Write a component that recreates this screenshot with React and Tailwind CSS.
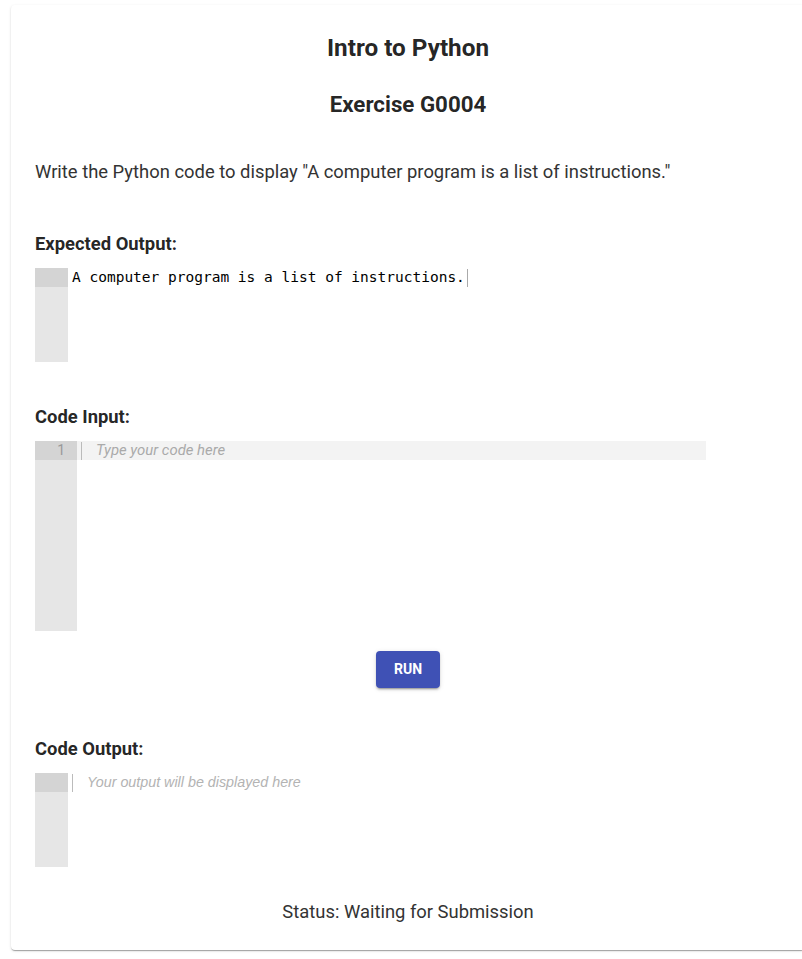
export default function App() {
  return (
    <div className="min-h-screen w-full overflow-hidden bg-white" style={{ fontFamily: 'Roboto, "Liberation Sans", sans-serif' }}>
      <div className="ml-[11px] mt-[5px] w-[794px] rounded-[4px] bg-white px-[24px] pt-[27px] pb-[25px] text-[rgba(0,0,0,0.87)] shadow-[0_2px_1px_-1px_rgba(0,0,0,0.2),0_1px_1px_0_rgba(0,0,0,0.14),0_1px_3px_0_rgba(0,0,0,0.12)]">
        {/* Header */}
        <h1 className="text-center text-[24.3px] font-bold leading-[32px]">Intro to Python</h1>
        <h2 className="mt-[26px] text-center text-[22.3px] font-bold leading-[28px]">Exercise G0004</h2>

        <p className="mt-[40px] text-[18.4px] leading-[27px] text-[#333]">
          Write the Python code to display "A computer program is a list of instructions."
        </p>

        {/* Expected output */}
        <h3 className="mt-[47px] text-[18.4px] font-bold leading-[24px]">Expected Output:</h3>
        <div className="mt-[12px] flex h-[94px]">
          <div className="flex w-[33px] flex-col bg-[#e6e6e6]">
            <div className="h-[19px] bg-[#d4d4d4]" />
          </div>
          <div className="flex h-[19px] items-center pl-[4px]">
            <span className="text-[14.5px] leading-[19px] text-black" style={{ fontFamily: '"DejaVu Sans Mono", "Liberation Mono", monospace' }}>
              A computer program is a list of instructions.
            </span>
            <span className="ml-[2px] h-[18px] w-px bg-[#aaa]" />
          </div>
        </div>

        {/* Code input */}
        <h3 className="mt-[43px] text-[18.4px] font-bold leading-[24px]">Code Input:</h3>
        <div className="mt-[12px] flex h-[190px] w-[671px]">
          <div className="flex w-[42px] flex-col bg-[#e6e6e6]">
            <div className="h-[19px] bg-[#d4d4d4] pr-[12px] text-right text-[14px] leading-[19px] text-[#999]">1</div>
          </div>
          <div className="flex-1">
            <div className="flex h-[19px] items-center bg-[#f3f3f3] pl-[4px]">
              <span className="h-[18px] w-px bg-[#bbb]" />
              <span className="ml-[14px] text-[14.9px] italic leading-[19px] text-[#aaa]">Type your code here</span>
            </div>
          </div>
        </div>

        <div className="mt-[20px] flex justify-center">
          <button className="h-[37px] w-[64px] rounded-[4px] bg-[#3f51b5] text-[14px] font-bold text-white shadow-[0_3px_1px_-2px_rgba(0,0,0,0.2),0_2px_2px_0_rgba(0,0,0,0.14),0_1px_5px_0_rgba(0,0,0,0.12)]">
            RUN
          </button>
        </div>

        {/* Code output */}
        <h3 className="mt-[49px] text-[18.4px] font-bold leading-[24px]">Code Output:</h3>
        <div className="mt-[12px] flex h-[94px]">
          <div className="flex w-[33px] flex-col bg-[#e6e6e6]">
            <div className="h-[19px] bg-[#d4d4d4]" />
          </div>
          <div className="flex h-[19px] items-center pl-[4px]">
            <span className="h-[18px] w-px bg-[#bbb]" />
            <span className="ml-[14px] text-[14.3px] italic leading-[19px] text-[#b3b3b3]" style={{ fontFamily: '"Liberation Sans", Arial, sans-serif' }}>
              Your output will be displayed here
            </span>
          </div>
        </div>

        <p className="mt-[31px] text-center text-[18.4px] leading-[27px] text-[#333]">Status: Waiting for Submission</p>
      </div>
    </div>
  )
}
